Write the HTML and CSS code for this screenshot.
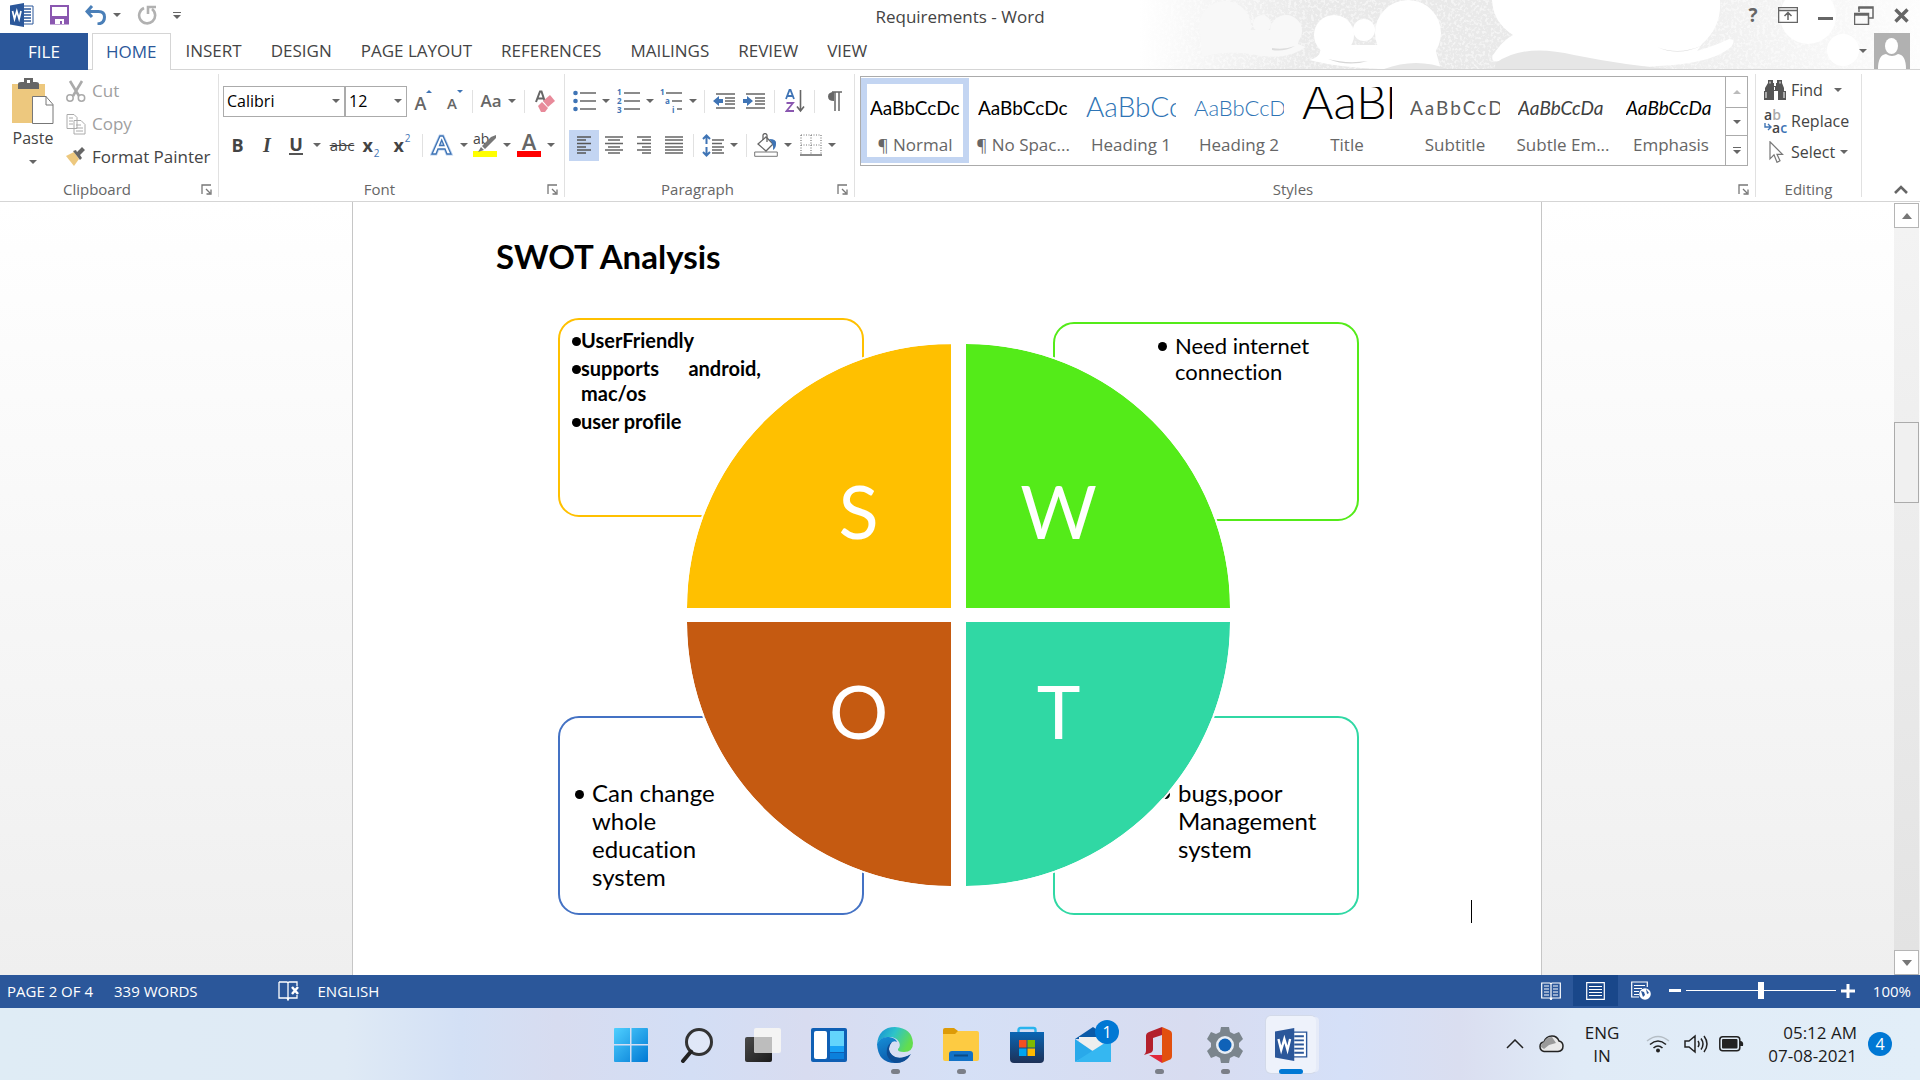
FILE: index.html
```html
<!DOCTYPE html>
<html lang="en">
<head>
<meta charset="utf-8">
<title>Requirements - Word</title>
<link rel="stylesheet" href="styles.css">
</head>
<body>
<svg class="sprite" aria-hidden="true">
  <symbol id="launcher" viewBox="0 0 11 11"><path d="M1 10V1h9M5 5l4 4M10 5.500v4.500H5.500" fill="none" stroke="#777" stroke-width="1.300"/></symbol>
  <symbol id="word" viewBox="0 0 24 24"><path d="M13 3h10v18H13z" fill="#fff" stroke="#2b579a"/><path d="M14 6h7M14 9h7M14 12h7M14 15h7M14 18h7" stroke="#2b579a" stroke-width="1.400"/><path d="M0 2.500 14 0v24L0 21.500z" fill="#2b579a"/><path d="M2.500 8l2 8 2.300-8 2.300 8L11 8" fill="none" stroke="#fff" stroke-width="1.700"/></symbol>
</svg>

<header class="header">
  <svg class="art" viewBox="0 0 780 69" aria-hidden="true">
    <defs>
      <linearGradient id="fade"><stop offset="0" stop-color="#fff"/><stop offset=".1" stop-color="#f4f4f4"/><stop offset=".22" stop-color="#e9e9e9"/><stop offset=".48" stop-color="#e9e9e9"/><stop offset=".75" stop-color="#f0f0f0"/><stop offset="1" stop-color="#fdfdfd"/></linearGradient>
      <filter id="grain" x="0" y="0" width="1" height="1"><feTurbulence type="fractalNoise" baseFrequency=".35" numOctaves="3" seed="4"/><feColorMatrix values="0 0 0 0 1  0 0 0 0 1  0 0 0 0 1  0 0 0 5 -2.400"/></filter>
    </defs>
    <path d="M0 0h780v69H0z" fill="url(#fade)"/>
    <path d="M0 0h780v69H0z" filter="url(#grain)" opacity=".5"/>
    <g fill="#f8f8f8"><circle cx="85" cy="27" r="26"/><circle cx="122" cy="24" r="9"/><circle cx="146" cy="31" r="16"/><path d="M60 30h98v14l8 3q-20 14-50 8-28-6-54 2z"/></g>
    <path d="M132 48q12 2 23-2-11 6-23 4z" fill="#ddd"/>
    <g fill="#fff"><circle cx="194" cy="35" r="20"/><circle cx="224" cy="30" r="11"/><circle cx="268" cy="33" r="33"/><path d="M180 45h115q0 5 6 24h-60q-40-1-72-9 14-3 11-15z"/>
    <path d="M352 0h228q2 26-18 44l-5 7q20-6 32-12 8 0 2 8-20 17-73 19-40 3-90-10-40-9-69 5-9 2-6-6 10-15 20-20Q353 22 352 0z"/><circle cx="703" cy="50" r="16"/><circle cx="668" cy="16" r="28"/></g>
    <path d="M188 59q18 5 40 2-20 6-40-2zM517 47q22 9 46-2-24 12-46 2z" fill="#d6d6d6"/>
    <path d="M244 69q32-12 64 0zM356 63q27-20 78-8 50 10 96 14H354z" fill="#e6e6e6"/>
  </svg>

  <div class="titlebar">
    <div class="quick">
      <svg width="24" height="24" role="img" aria-label="Word"><use href="#word"/></svg>
      <button aria-label="Save"><svg width="19" height="20" viewBox="0 0 19 20"><path d="M1 1h17v17.500H1z" fill="#fff" stroke="#8a57b0" stroke-width="2"/><path d="M1 11h17v8H1z" fill="#8a57b0"/><path d="M5 14h9v5h-2v-3h-2v3H5z" fill="#fff"/></svg></button>
      <button class="undo" aria-label="Undo"><svg width="22" height="20" viewBox="0 0 22 20"><path d="M7 1 2 6.500 7 12M2.500 6.500h11q6 0 6 5.500 0 6.500-7 7" fill="none" stroke="#4a7fb8" stroke-width="3"/></svg><i class="caret"></i></button>
      <button aria-label="Repeat"><svg width="20" height="20" viewBox="0 0 20 20"><path d="M15 4A8 8 0 1 1 7 3M11 9V2h8" fill="none" stroke="#b1b1b1" stroke-width="2.600"/></svg></button>
      <button class="more" aria-label="Customize Quick Access Toolbar"><i class="bar"></i><i class="caret"></i></button>
    </div>
    <h1 class="title">Requirements - Word</h1>
    <div class="window">
      <button class="help" aria-label="Help">?</button>
      <button aria-label="Ribbon display options"><svg width="20" height="16" viewBox="0 0 20 16"><path d="M.5.5h19v15H.5zM1 3.500h18M10 13V6M6.500 9 10 5.500 13.500 9" fill="none" stroke="#666" stroke-width="1.500"/></svg></button>
      <button aria-label="Minimize"><svg width="16" height="16" viewBox="0 0 16 16"><path d="M0 10h15v3H0z" fill="#666"/></svg></button>
      <button aria-label="Restore"><svg width="20" height="19" viewBox="0 0 20 19"><path d="M5 6V1h14v11h-4M4 2h15M.5 7.500h14v11H.5zM1 9h13" fill="none" stroke="#666" stroke-width="1.500"/></svg></button>
      <button aria-label="Close"><svg width="15" height="15" viewBox="0 0 15 15"><path d="m1.500 1.500 12 12m0-12-12 12" stroke="#666" stroke-width="3.400"/></svg></button>
    </div>
  </div>

  <nav class="tabs">
    <button class="file">FILE</button>
    <button class="active">HOME</button>
    <button>INSERT</button>
    <button>DESIGN</button>
    <button>PAGE LAYOUT</button>
    <button>REFERENCES</button>
    <button>MAILINGS</button>
    <button>REVIEW</button>
    <button>VIEW</button>
    <button class="account" aria-label="Account"><i class="caret"></i><svg width="36" height="36" viewBox="0 0 36 36"><path d="M0 0h36v36H0z" fill="#b1b1b1"/><ellipse cx="17.500" cy="13" rx="6.500" ry="8" fill="#fff"/><path d="M4 36q0-14 8-15 6 4 12 0 8 1 8 15z" fill="#fff"/></svg></button>
  </nav>
</header>

<section class="ribbon" aria-label="Home">
  <div class="group clipboard">
    <div class="body">
      <button class="paste"><svg width="42" height="46" viewBox="0 0 42 46"><path d="M0 6h33v39H0z" fill="#edc87e"/><path d="M6 11V6q0-2 3-2h3V0h9v4h3q3 0 3 2v5z" fill="#666"/><path d="M15 2h3v3h-3z" fill="#fff"/><path d="M20.500 18.500H34l7 8V45.500H20.500z" fill="#fff" stroke="#777"/><path d="M34 18v9h7" fill="none" stroke="#777"/></svg><span>Paste</span><i class="caret"></i></button>
      <div class="stack">
        <button class="off"><svg width="20" height="22" viewBox="0 0 20 22"><path d="m4 1 9 15M16 1 7 16" stroke="#aaa" stroke-width="2.600"/><circle cx="4" cy="18" r="3.200" fill="none" stroke="#aaa" stroke-width="1.500"/><circle cx="15.500" cy="18" r="3.200" fill="none" stroke="#aaa" stroke-width="1.500"/></svg>Cut</button>
        <button class="off"><svg width="20" height="22" viewBox="0 0 20 22"><g fill="#fff" stroke="#aaa"><path d="M1 1.500h7l3 3v11H1zM8 7.500h7l4 4v9.500H8z"/><path d="M3 5h4M3 8h4M3 11h4M10 12h5M10 15h7M10 18h7"/></g></svg>Copy</button>
        <button><svg width="20" height="20" viewBox="0 0 20 20"><path d="m0 9 8-4 5 7-5 7z" fill="#edc87e"/><path d="m7 4 3-1 1 2 5-5 3 3-5 5 2 3-2 2z" fill="#666"/></svg>Format Painter</button>
      </div>
    </div>
    <footer><span>Clipboard</span><button aria-label="Clipboard options"><svg width="11" height="11"><use href="#launcher"/></svg></button></footer>
  </div>

  <div class="group font">
    <div class="row f1">
      <label class="combo"><input type="text" value="Calibri" aria-label="Font"><i class="caret"></i></label>
      <label class="combo size"><input type="text" value="12" aria-label="Font size"><i class="caret"></i></label>
      <button class="resize grow" aria-label="Increase font size">A<i class="tri up"></i></button>
      <button class="resize shrink" aria-label="Decrease font size">A<i class="tri"></i></button>
      <i class="sep"></i>
      <button class="case">Aa<i class="caret"></i></button>
      <i class="sep"></i>
      <button aria-label="Clear formatting"><svg width="20" height="22" viewBox="0 0 20 22"><path d="M1 12 5 1.500h1.500L10 12M2.500 8.500h6" fill="none" stroke="#666" stroke-width="2"/><path d="m3 16 4-4 6 6-3 4H6z" fill="#e88a9a"/><path d="m8 11 7-6 5 6-7 6z" fill="#e88a9a"/></svg></button>
    </div>
    <div class="row f2">
      <button><b>B</b></button>
      <button class="italic">I</button>
      <button class="wide"><b class="under">U</b><i class="caret"></i></button>
      <button class="strike">abc</button>
      <button class="script"><b>x</b><sub>2</sub></button>
      <button class="script"><b>x</b><sup>2</sup></button>
      <i class="sep"></i>
      <button class="mid" aria-label="Text effects"><svg width="24" height="22" viewBox="0 0 24 22"><path d="M2 20 10 2h3l8 18h-4l-2-5H8l-2 5zM9.500 11.500h4.500L11.700 6z" fill="#fff" stroke="#b9d0ee" stroke-width="3"/><path d="M2 20 10 2h3l8 18h-4l-2-5H8l-2 5zM9.500 11.500h4.500L11.700 6z" fill="#fff" stroke="#3f74b5" stroke-width="1.300"/></svg><i class="caret"></i></button>
      <button class="mid" aria-label="Text highlight color"><span class="mark">ab<svg width="24" height="18" viewBox="0 0 24 18"><path d="m23 0-5 2-9 9 3 3 11-11zM8 12l-3 5 6-2z" fill="#777"/></svg></span><i class="caret"></i></button>
      <button class="mid" aria-label="Font color"><span class="inkred">A</span><i class="caret"></i></button>
    </div>
    <footer><span>Font</span><button aria-label="Font options"><svg width="11" height="11"><use href="#launcher"/></svg></button></footer>
  </div>

  <div class="group paragraph">
    <div class="row p1">
      <button aria-label="Bullets"><svg width="23" height="22" viewBox="0 0 23 22"><path d="M7 3h16M7 11h16M7 19h16" stroke="#666" stroke-width="1.300"/><g fill="#3f74b5"><circle cx="2.500" cy="3" r="2.300"/><circle cx="2.500" cy="11" r="2.300"/><circle cx="2.500" cy="19" r="2.300"/></g></svg><i class="caret"></i></button>
      <button aria-label="Numbering"><svg class="num" width="23" height="22" viewBox="0 0 23 22"><path d="M7 3h16M7 11h16M7 19h16" stroke="#666" stroke-width="1.300"/><g fill="#3f74b5"><text x="0" y="5">1</text><text x="0" y="14">2</text><text x="0" y="23">3</text></g></svg><i class="caret"></i></button>
      <button aria-label="Multilevel list"><svg class="num" width="23" height="22" viewBox="0 0 23 22"><path d="M6 3h16M12 11h10M17 19h5" stroke="#666" stroke-width="1.300"/><g fill="#3f74b5"><text x="0" y="5">1</text><text x="5" y="14">a</text><text x="12" y="23">i</text></g></svg><i class="caret"></i></button>
      <i class="sep"></i>
      <button aria-label="Decrease indent"><svg width="22" height="16" viewBox="0 0 22 16"><path d="M3 1h19M12 5h10M12 8h10M12 11h10M3 15h19" stroke="#666" stroke-width="1.300"/><path d="M0 8l6-5v3h4v4H6v3z" fill="#3f74b5"/></svg></button>
      <button aria-label="Increase indent"><svg width="22" height="16" viewBox="0 0 22 16"><path d="M3 1h19M12 5h10M12 8h10M12 11h10M3 15h19" stroke="#666" stroke-width="1.300"/><path d="M10 8 4 3v3H0v4h4v3z" fill="#3f74b5"/></svg></button>
      <i class="sep"></i>
      <button aria-label="Sort"><svg width="20" height="24" viewBox="0 0 20 24"><path d="M1 10 4.500 1h1L9 10M2.500 7h5" fill="none" stroke="#3f74b5" stroke-width="1.800"/><path d="M1.500 14H8l-6.500 8H9" fill="none" stroke="#8a57b0" stroke-width="1.800"/><path d="M15.500 1v21M12 17.500l3.500 4.500 3.500-4.500" fill="none" stroke="#666" stroke-width="1.600"/></svg></button>
      <i class="sep"></i>
      <button aria-label="Show formatting marks"><svg width="15" height="20" viewBox="0 0 15 20"><path d="M7 1v9Q1 10 1 5.500 1 1 7 1z" fill="#666"/><path d="M5 1h10M8 1v19M12 1v19" stroke="#666" stroke-width="1.500"/></svg></button>
    </div>
    <div class="row p2">
      <button class="on" aria-label="Align left"><svg width="14" height="18" viewBox="0 0 14 18"><path d="M0 1h14M0 4h9M0 7.500h14M0 11h9M0 14h14M0 17h9" stroke="#555" stroke-width="1.300"/></svg></button>
      <button aria-label="Center"><svg width="18" height="18" viewBox="0 0 18 18"><path d="M0 1h18M3 4h12M0 7.500h18M3 11h12M0 14h18M3 17h12" stroke="#666" stroke-width="1.300"/></svg></button>
      <button aria-label="Align right"><svg width="14" height="18" viewBox="0 0 14 18"><path d="M0 1h14M5 4h9M0 7.500h14M5 11h9M0 14h14M5 17h9" stroke="#666" stroke-width="1.300"/></svg></button>
      <button aria-label="Justify"><svg width="18" height="18" viewBox="0 0 18 18"><path d="M0 1h18M0 4h18M0 7.500h18M0 11h18M0 14h18M0 17h18" stroke="#666" stroke-width="1.300"/></svg></button>
      <i class="sep"></i>
      <button aria-label="Line spacing"><svg width="22" height="23" viewBox="0 0 22 23"><path d="M10 6h12M10 9.500h10M10 13h12M10 16h10M10 19h12" stroke="#666" stroke-width="1.300"/><path d="M4.500 2v8M4.500 13v8M1 5l3.500-3.500L8 5M1 18l3.500 3.500L8 18" fill="none" stroke="#3f74b5" stroke-width="2"/></svg><i class="caret"></i></button>
      <i class="sep"></i>
      <button aria-label="Shading"><svg width="24" height="24" viewBox="0 0 24 24"><path d="M.7 19h22.600v4.300H.7z" fill="#fff" stroke="#777"/><path d="M4 11 12 4l7 7-7 7z" fill="#fff" stroke="#666" stroke-width="1.300"/><path d="M9 7V2q2-3 4 0v7" fill="none" stroke="#666" stroke-width="1.300"/><path d="M15 6q8 0 7 5 0 4-3 6 1-6-4-11z" fill="#3f74b5"/></svg><i class="caret"></i></button>
      <button aria-label="Borders"><svg width="22" height="22" viewBox="0 0 22 22"><path d="M1 1h20v20M1 1v20M11 1v20M1 11h20" fill="none" stroke="#777" stroke-width="1.200" stroke-dasharray="1 1.500"/><path d="M0 21h22" stroke="#666" stroke-width="1.500"/></svg><i class="caret"></i></button>
    </div>
    <footer><span>Paragraph</span><button aria-label="Paragraph options"><svg width="11" height="11"><use href="#launcher"/></svg></button></footer>
  </div>

  <div class="group styles">
    <div class="gallery">
      <button class="style picked"><span class="pv">AaBbCcDc</span><span>¶ Normal</span></button>
      <button class="style"><span class="pv">AaBbCcDc</span><span>¶ No Spac...</span></button>
      <button class="style"><span class="pv h1">AaBbCc</span><span>Heading 1</span></button>
      <button class="style"><span class="pv h2">AaBbCcD</span><span>Heading 2</span></button>
      <button class="style"><span class="pv ttl">AaBb</span><span>Title</span></button>
      <button class="style"><span class="pv sub">AaBbCcD</span><span>Subtitle</span></button>
      <button class="style"><span class="pv em soft">AaBbCcDa</span><span>Subtle Em...</span></button>
      <button class="style"><span class="pv em">AaBbCcDa</span><span>Emphasis</span></button>
      <div class="pager">
        <button class="dim" aria-label="Previous styles"><i class="caret up"></i></button>
        <button aria-label="Next styles"><i class="caret"></i></button>
        <button class="more" aria-label="More styles"><i class="bar"></i><i class="caret"></i></button>
      </div>
    </div>
    <footer><span>Styles</span><button aria-label="Styles options"><svg width="11" height="11"><use href="#launcher"/></svg></button></footer>
  </div>

  <div class="group editing">
    <div class="stack">
      <button><svg width="22" height="20" viewBox="0 0 22 20"><path d="M4 0h5v3h1v3h2V3h1V0h5v3l2 5v3h2v9h-8v-9h-4v9H0v-9h1V8l3-5z" fill="#555"/><path d="M2 12v6M20 12v6M10.500 7v3M6 1.500v2M16 1.500v2" stroke="#fff"/></svg>Find<i class="caret far"></i></button>
      <button><span class="abac"><span>a<em>b</em></span><span><svg width="8" height="8" viewBox="0 0 8 8"><path d="M1 0v4h6M4 1l3 3-3 3" fill="none" stroke="#3f74b5" stroke-width="1.400"/></svg>a<u>c</u></span></span>Replace</button>
      <button><svg width="22" height="22" viewBox="0 0 22 22"><path d="M6 .8v17l4-4 3 7.500 3-1.500-3-6.500h5.500z" fill="#fff" stroke="#777" stroke-width="1.200"/></svg>Select<i class="caret"></i></button>
    </div>
    <footer><span>Editing</span></footer>
  </div>
  <button class="collapse" aria-label="Collapse the ribbon"><svg width="14" height="9" viewBox="0 0 14 9"><path d="m1 8 6-6 6 6" fill="none" stroke="#666" stroke-width="2.600"/></svg></button>
</section>

<main class="workspace">
  <article class="page">
    <h2>SWOT Analysis</h2>
    <div class="line">
      <div class="diagram">
        <ul class="card s"><li>UserFriendly</li><li><span class="spread"><span>supports</span><span>android,</span></span>mac/os</li><li>user profile</li></ul>
        <ul class="card w"><li>Need internet connection</li></ul>
        <ul class="card o"><li>Can change whole education system</li></ul>
        <ul class="card t"><li>bugs,poor Management system</li></ul>
        <div class="wheel">
          <div class="q qs">S</div><div class="q qw">W</div><div class="q qo">O</div><div class="q qt">T</div>
        </div>
      </div>
      <i class="cursor"></i>
    </div>
  </article>
  <div class="scroll">
    <button aria-label="Scroll up"><i class="arrow up"></i></button>
    <div class="track"><div class="thumb"></div></div>
    <button aria-label="Scroll down"><i class="arrow"></i></button>
  </div>
</main>

<footer class="status">
  <span>PAGE 2 OF 4</span>
  <span class="words">339 WORDS</span>
  <svg width="22" height="20" viewBox="0 0 22 20"><path d="M1 1h8l1 1 1-1h8v4M1 1v16h8l1 2 1-2h8v-3M10 2v16" fill="none" stroke="#fff" stroke-width="1.300"/><path d="m14 6 6 7m0-7-6 7" stroke="#fff" stroke-width="2.500"/></svg>
  <span>ENGLISH</span>
  <div class="views">
    <button aria-label="Read mode"><svg width="20" height="18" viewBox="0 0 20 18"><path d="M.7 1H9l1 1 1-1h8.300v15H11l-1 2-1-2H.7zM10 1v16M3 4h5M3 7h5M3 10h5M3 13h5M12 4h5M12 7h5M12 10h5M12 13h5" fill="none" stroke="#fff" stroke-width="1.200"/></svg></button>
    <button class="on" aria-label="Print layout"><svg width="19" height="18" viewBox="0 0 19 18"><path d="M.7.700h17.600v16.600H.7zM3 4.500h13M3 7.500h13M3 10.500h13M3 13.500h13" fill="none" stroke="#fff" stroke-width="1.200"/></svg></button>
    <button aria-label="Web layout"><svg width="20" height="20" viewBox="0 0 20 20"><path d="M8 16H.7V1h15.600v5M3 4.500h11M3 7.500h8M3 10.500h5M3 13.500h5" fill="none" stroke="#fff" stroke-width="1.200"/><circle cx="14" cy="13" r="5.800" fill="#fff"/><path d="m10 10 3 1 1 3-2 2M15 8l3 4-2 1z" fill="#2b579a"/></svg></button>
    <button class="zoom" aria-label="Zoom out"><svg width="12" height="3"><path d="M0 0h12v3H0z" fill="#fff"/></svg></button>
    <input type="range" min="0" max="100" value="50" aria-label="Zoom">
    <button class="zoom" aria-label="Zoom in"><svg width="14" height="14"><path d="M0 5.500h14v3H0zM5.500 0h3v14h-3z" fill="#fff"/></svg></button>
    <span class="percent">100%</span>
  </div>
</footer>

<nav class="taskbar" aria-label="Taskbar">
  <div class="apps">
    <button aria-label="Start"><svg width="36" height="36" viewBox="0 0 36 36"><defs><linearGradient id="gw" x2="1" y2="1"><stop offset="0" stop-color="#4fd0ff"/><stop offset="1" stop-color="#0078d4"/></linearGradient></defs><path d="M1 2q0-1 1-1h15v16H1zM18.500 1H34q1 0 1 1v15H18.500zM1 18.500h16V35H2q-1 0-1-1zM18.500 18.500H35V34q0 1-1 1H18.500z" fill="url(#gw)"/></svg></button>
    <button aria-label="Search"><svg width="36" height="36" viewBox="0 0 36 36"><circle cx="20" cy="15" r="12.500" fill="#fff" fill-opacity=".3" stroke="#333" stroke-width="3"/><path d="M12 24.500 4 34" stroke="#222" stroke-width="4" stroke-linecap="round"/></svg></button>
    <button aria-label="Task view"><svg width="36" height="36" viewBox="0 0 36 36"><defs><linearGradient id="gt" x2="1" y2="1"><stop offset="0" stop-color="#4a4a4a"/><stop offset="1" stop-color="#1b1b1b"/></linearGradient></defs><rect y="10" width="27" height="25" rx="2" fill="url(#gt)"/><rect x="9" y="1" width="27" height="25" rx="2" fill="#f4f4f4"/><path d="M9 10h18v16H11q-2 0-2-2z" fill="#bdbdbd"/></svg></button>
    <button aria-label="Widgets"><svg width="36" height="36" viewBox="0 0 36 36"><rect y="1" width="36" height="34" rx="2" fill="#0f5fb4"/><rect x="3" y="4" width="13" height="28" rx="2" fill="#fff"/><path d="M19 4h14v15H19z" fill="#63d4fc"/><path d="M19 19h14v6H19z" fill="#19a2f5"/><path d="M19 26h14v6H19z" fill="#0b80dc"/></svg></button>
    <button class="open" aria-label="Edge"><svg width="38" height="38" viewBox="0 0 38 38"><defs><linearGradient id="ge1" x2="1" y2=".4"><stop offset="0" stop-color="#1489d6"/><stop offset=".5" stop-color="#2ec3c9"/><stop offset="1" stop-color="#63dd4e"/></linearGradient><linearGradient id="ge2" x2=".5" y2="1"><stop offset="0" stop-color="#1790d8"/><stop offset="1" stop-color="#0a57a8"/></linearGradient></defs><path d="M1 18Q3 1 19 1q17 1 18 16 0 9-9 9-7 0-6-3 3-3 1-7-3-5-10-5Q5 11 1 18z" fill="url(#ge1)"/><path d="M1 18q4-8 12-7 7 1 8 5-4-2-7 2-3 5 1 10 6 8 19 1-5 8-15 8Q2 37 1 18z" fill="url(#ge2)"/><path d="M16 16q-6 7 0 13 7 6 19-1-5 9-15 9Q9 33 11 23q1-5 5-7z" fill="#0d4d94"/></svg></button>
    <button class="open" aria-label="File Explorer"><svg width="36" height="36" viewBox="0 0 36 36"><path d="M0 3q0-2 2-2h9l4 3v5H0z" fill="#dd9b07"/><path d="M0 7h12l3-3h19q2 0 2 2v26q0 2-2 2H2q-2 0-2-2z" fill="#fdcb42"/><path d="M6 34V27q0-3 3-3h18q3 0 3 3v7z" fill="#1272c7"/><path d="M11 28.500h14" stroke="#0b4b86" stroke-width="2"/></svg></button>
    <button aria-label="Microsoft Store"><svg width="36" height="38" viewBox="0 0 36 38"><defs><linearGradient id="gs" x2="0" y2="1"><stop offset="0" stop-color="#0a66b4"/><stop offset="1" stop-color="#1e3157"/></linearGradient></defs><path d="M9.500 8V4q0-2 2-2h13q2 0 2 2v4" fill="none" stroke="#29b4ee" stroke-width="2.400"/><path d="M1 6h34v27q0 4-4 4H5q-4 0-4-4z" fill="url(#gs)"/><path d="M10 14h7.500v7.500H10z" fill="#f25022"/><path d="M18.500 14H26v7.500h-7.500z" fill="#7fba00"/><path d="M10 22.500h7.500V30H10z" fill="#00a4ef"/><path d="M18.500 22.500H26V30h-7.500z" fill="#ffb900"/></svg></button>
    <button class="mail" aria-label="Mail"><svg width="36" height="36" viewBox="0 0 36 36"><path d="M0 12 18 0l18 12z" fill="#0a5aa8"/><path d="M4 10h28v10L18 26 4 18z" fill="#eee"/><path d="M0 12l19 13L0 35z" fill="#29a9ea"/><path d="M36 12v23H0z" fill="#35b7f1"/></svg><span class="count">1</span></button>
    <button class="open" aria-label="Office"><svg width="30" height="36" viewBox="0 0 30 36"><path d="M18 0 5 5Q2 6 2 9v15q0 2-2 4l6-2q3-1 3-4V11l9-3z" fill="#b3202c"/><path d="m18 0 7 3q3 1 3 4v22q0 3-3 4l-7 3z" fill="#e2500f"/><path d="M5 28h13v8z" fill="#e0283c"/></svg></button>
    <button class="open" aria-label="Settings"><svg width="36" height="36" viewBox="0 0 36 36"><path d="M14 0h8l1 5 4 2 5-2 4 7-4 4v4l4 4-4 7-5-2-4 2-1 5h-8l-1-5-4-2-5 2-4-7 4-4v-4l-4-4 4-7 5 2 4-2z" fill="#7b858d"/><circle cx="18" cy="18" r="9" fill="#e8eef5"/><circle cx="18" cy="18" r="6.500" fill="#0f62b8"/></svg></button>
    <button class="current" aria-label="Word"><svg width="33" height="33"><use href="#word"/></svg></button>
  </div>
  <div class="tray">
    <button aria-label="Show hidden icons"><svg width="18" height="10" viewBox="0 0 18 10"><path d="m1 9 8-8 8 8" fill="none" stroke="#222" stroke-width="1.500"/></svg></button>
    <svg width="25" height="18" viewBox="0 0 25 18"><path d="M5 16.500q-4-1-4-5t4-4.500q2-6 8-6 5 0 7 5 4 1 4 5 0 5-5 5.500z" fill="#e9e9e9" stroke="#222" stroke-width="1.500"/><path d="M5 7q2-5 8-5l4 6-7 2-5 4-3-2q0-4 3-5z" fill="#9a9a9a"/></svg>
    <span class="lang">ENG<br>IN</span>
    <svg width="24" height="18" viewBox="0 0 24 18"><path d="M1 6Q12-3 23 6" fill="none" stroke="#b5bec6" stroke-width="1.500"/><path d="M4 9.500q8-7 16 0M7.500 13q4.500-4 9 0" fill="none" stroke="#222" stroke-width="1.600"/><circle cx="12" cy="15.500" r="2" fill="#222"/></svg>
    <svg width="24" height="20" viewBox="0 0 24 20"><path d="M1 7h4l6-5v16l-6-5H1zM14 7q2 3 0 6M17 4.500q4 5.500 0 11M20 2q6 8 0 16" fill="none" stroke="#222" stroke-width="1.500"/></svg>
    <svg width="25" height="16" viewBox="0 0 25 16"><rect x=".8" y=".8" width="20" height="14" rx="3" fill="none" stroke="#222" stroke-width="1.500"/><rect x="3" y="3" width="15.500" height="9.500" rx="1" fill="#222"/><path d="M21 5q4 0 3 5h-3z" fill="#222"/></svg>
    <span class="clock">05:12 AM<br>07-08-2021</span>
    <span class="note">4</span>
  </div>
</nav>
</body>
</html>
```
FILE: styles.css
```css
* { box-sizing: border-box; }

body {
  margin: 0;
  height: 100vh;
  display: flex;
  flex-direction: column;
  overflow: hidden;
  background: #fff;
  color: #444;
  font: 16px/22px "Open Sans", "Noto Sans", sans-serif;
}

button {
  display: flex;
  align-items: center;
  justify-content: center;
  padding: 0;
  border: 0;
  background: none;
  color: inherit;
  font: inherit;
  white-space: nowrap;
}

svg { display: block; flex: none; }
.sprite { position: absolute; width: 0; height: 0; }

.caret {
  flex: none;
  border: 4px solid transparent;
  border-top-color: #666;
  border-bottom: 0;
}
.caret.up { border-top: 0; border-bottom: 4px solid #bbb; }
.bar { width: 8px; height: 1px; background: #666; }

/* title bar and tabs */
.header { position: relative; flex: none; }
.art { position: absolute; right: 0; top: 0; width: 780px; height: 69px; }

.titlebar {
  position: relative;
  height: 33px;
  display: grid;
  grid-template-columns: 1fr auto 1fr;
  align-items: start;
}
.quick { display: flex; align-items: center; height: 30px; padding-left: 10px; gap: 16px; }
.quick .undo { gap: 6px; }
.more { flex-direction: column; gap: 2px; }
.title { margin: 0; font-size: 17px; font-weight: 400; line-height: 33px; }
.window { justify-self: end; display: flex; align-items: center; height: 30px; gap: 20px; padding-right: 11px; }
.help { width: 10px; font-size: 19px; font-weight: 700; color: #666; }

.tabs {
  position: relative;
  display: flex;
  gap: 1px;
  height: 37px;
  border-bottom: 1px solid #d5d5d5;
}
.tabs button { padding: 0 14px; font-size: 17px; }
.tabs .file { width: 88px; height: 37px; margin-right: 3px; background: #2b579a; color: #fff; }
.tabs .active { height: 37px; padding: 0 13px; border: 1px solid #d5d5d5; border-bottom: 0; background: #fff; color: #2b579a; }
.tabs .account { margin-left: auto; padding: 0 10px 0 0; gap: 7px; }

/* ribbon */
.ribbon {
  flex: none;
  display: flex;
  height: 132px;
  padding: 4px 0;
  border-bottom: 1px solid #d5d5d5;
}
.group {
  display: flex;
  flex-direction: column;
  border-right: 1px solid #e1e1e1;
}
.group footer { display: flex; margin-top: auto; padding: 0 4px 0 0; height: 16px; color: #666; font-size: 15px; line-height: 16px; }
.group footer span { flex: 1; padding-right: 4px; text-align: center; }
.group footer button { width: 16px; }

.clipboard { width: 219px; }
.body { display: flex; }
.paste { flex-direction: column; width: 66px; justify-content: flex-start; padding-top: 4px; gap: 3px; }
.paste .caret { margin-top: 8px; }
.stack { display: flex; flex-direction: column; }
.stack button { justify-content: flex-start; height: 33px; gap: 6px; }
.clipboard .stack { font-size: 17px; }
.off { color: #a0a0a0; }

.row { display: grid; align-items: center; justify-items: center; height: 32px; padding-left: 4px; }
.row button { height: 31px; gap: 6px; }
.sep { width: 1px; height: 23px; background: #e1e1e1; }

.font { width: 346px; }
.f1, .p1 { margin: 11px 0 12px; }
.f1 { grid-template-columns: 122px 62px 33px 30px 4px 48px 4px 38px; }
.f2 { grid-template-columns: 29px 30px 46px 28px 30px 32px 8px 46px 40px 48px; font-size: 18px; }
.combo { display: flex; align-items: center; width: 100%; height: 31px; padding-right: 4px; border: 1px solid #ababab; }
.combo input { flex: 1; min-width: 0; padding: 0 3px; border: 0; background: none; color: #000; font: inherit; }
.row .resize { padding-top: 4px; gap: 0; font-size: 18px; font-weight: 600; color: #666; }
.row .shrink { font-size: 15px; }
.tri { align-self: flex-start; border: 3px solid transparent; border-top-color: #3f74b5; border-bottom: 0; }
.tri.up { border-top: 0; border-bottom: 3px solid #3f74b5; }
.case { font-size: 17px; font-weight: 600; color: #666; }
.italic { font: italic 700 20px/22px "Liberation Serif", serif; }
.row .wide { gap: 10px; }
.under { border-bottom: 2px solid #555; line-height: 18px; }
.row .strike { font-size: 15px; text-decoration: line-through; }
.row .script { gap: 1px; }
.script sub, .script sup { font-size: 10px; line-height: 10px; color: #3f74b5; }
.script sub { align-self: flex-end; padding-bottom: 3px; }
.script sup { align-self: flex-start; padding-top: 3px; }
.mark { position: relative; width: 24px; height: 24px; border-bottom: 6px solid #ff0; font-size: 14px; line-height: 12px; text-align: left; }
.mark svg { position: absolute; left: 0; top: 2px; }
.inkred { width: 24px; height: 24px; border-bottom: 6px solid #f00; font-size: 22px; font-weight: 600; line-height: 17px; color: #666; }

.paragraph { width: 290px; }
.p1 { grid-template-columns: 44px 44px 43px 8px 32px 28px 12px 30px 8px 32px; }
.p2 { grid-template-columns: 30px 30px 30px 30px 8px 46px 6px 48px 42px; }
.p2 .on { width: 30px; background: #c3d5f2; }
.num { overflow: visible; font-size: 8px; font-weight: 700; line-height: 8px; }

.styles { flex: 1; min-width: 0; }
.gallery { display: flex; height: 90px; margin: 2px 7px 0 5px; border: 1px solid #ababab; }
.style {
  flex: 1;
  flex-direction: column;
  justify-content: flex-start;
  height: 85px;
  margin-top: 1px;
  padding: 3px 2px 0;
  border: 6px solid transparent;
  color: #666;
  min-width: 0;
  font-size: 17px;
}
.picked { border-color: #c3d5f2; }
.pv { width: 90px; height: 36px; margin-bottom: 11px; overflow: hidden; text-align: left; color: #000; font: 19px/41px Lato, sans-serif; }
.style span + span { line-height: 22px; }
.pv.h1 { font-size: 28px; line-height: 38px; font-weight: 300; color: #2e74b5; }
.pv.h2 { font-size: 22px; line-height: 41px; font-weight: 300; color: #2e74b5; }
.pv.ttl { font-size: 48px; line-height: 27px; font-weight: 300; }
.pv.sub { letter-spacing: 2px; color: #5a5a5a; }
.pv.em { font-style: italic; }
.pv.soft { color: #404040; }
.pager { display: grid; grid-template-rows: 30px 28px 1fr; width: 22px; border-left: 1px solid #ababab; }
.pager button + button { border-top: 1px solid #ababab; }

.editing { width: 106px; padding-left: 8px; }
.editing .stack button { height: 31px; gap: 5px; }
.far { margin-left: 6px; }
.abac { display: flex; flex-direction: column; width: 22px; font-size: 14px; line-height: 13px; font-weight: 600; text-align: left; }
.abac > span { display: flex; align-items: center; height: 13px; }
.abac em { font-style: normal; color: #aaa; }
.abac u { text-decoration: none; color: #3f74b5; }
.collapse { align-self: flex-end; margin-left: 32px; margin-right: 12px; height: 16px; }

/* document */
.workspace { flex: 1; min-height: 0; display: flex; background: linear-gradient(#fff, #efefef); }
.page {
  width: 1190px;
  margin: 0 auto;
  padding: 32px 0 0 143px;
  overflow: hidden;
  background: #fff;
  border: 1px solid #c6c6c6;
  border-width: 0 1px;
  color: #000;
  font-family: Lato, sans-serif;
  font-variant-ligatures: none;
}
.page h2 { margin: 0 0 40px; font-size: 33px; line-height: 44px; font-weight: 700; }
.line { display: flex; align-items: flex-end; margin-left: 62px; }
.cursor { width: 1px; height: 23px; margin-left: 112px; background: #000; }

.diagram {
  position: relative;
  display: grid;
  grid-template-columns: 306px 306px;
  justify-content: space-between;
  align-content: space-between;
  width: 801px;
  height: 597px;
  margin-bottom: 8px;
}
.card { height: 199px; margin: 0; border: 2px solid; border-radius: 21px; list-style: none; }
.card li { position: relative; color: #000; }
.card li::before { content: ""; position: absolute; left: -17px; top: 9px; width: 9px; height: 9px; border-radius: 50%; background: #000; }
.s { padding: 8px 0 0 21px; border-color: #ffc000; font-size: 20px; line-height: 25px; font-weight: 700; }
.s li { margin-bottom: 3px; }
.card.s li::before { left: -9px; }
.spread { display: flex; justify-content: space-between; width: 180px; }
.card.w { margin-top: 4px; margin-bottom: -4px; padding: 9px 30px 0 120px; border-color: #54eb19; font-size: 22px; line-height: 26px; }
.o { padding: 61px 130px 0 32px; border-color: #4472c4; font-size: 24px; line-height: 28px; }
.t { padding: 61px 20px 0 123px; border-color: #30d8a4; font-size: 24px; line-height: 28px; }
.o li::before, .t li::before { top: 11px; }

.wheel {
  position: absolute;
  top: 26px;
  left: 129px;
  display: grid;
  grid-template-columns: 264px 264px;
  grid-template-rows: 264px 264px;
  gap: 14px 15px;
}
.q { display: flex; align-items: center; justify-content: center; outline: 2px solid #fff; color: #fff; font-size: 74px; line-height: 74px; }
.qs { background: #ffc000; border-radius: 264px 0 0 0; padding: 70px 0 0 79px; }
.qw { background: #54eb19; border-radius: 0 264px 0 0; padding: 70px 79px 0 0; }
.qo { background: #c55a11; border-radius: 0 0 0 264px; padding: 0 0 86px 79px; }
.qt { background: #30d8a4; border-radius: 0 0 264px 0; padding: 0 79px 86px 0; }

.scroll { display: flex; flex-direction: column; width: 26px; padding: 1px 1px 0 0; }
.scroll button { height: 25px; border: 1px solid #b5b5b5; background: #fff; }
.arrow { border: 5px solid transparent; border-top: 6px solid #777; border-bottom: 0; }
.arrow.up { border-top: 0; border-bottom: 6px solid #777; }
.track { flex: 1; padding-top: 194px; background: linear-gradient(#f3f3f3, #e3e3e3); }
.thumb { height: 81px; border: 1px solid #ababab; background: #f0f0f0; }

/* status bar */
.status { flex: none; display: flex; align-items: center; height: 33px; padding: 0 0 2px 7px; background: #2b579a; color: #fff; font-size: 15px; }
.words { margin: 0 80px 0 21px; }
.status > svg { margin-right: 18px; }
.views { display: flex; align-items: center; height: 31px; margin-left: auto; }
.views button { width: 45px; height: 31px; }
.views .on { background: #19478a; }
.views .zoom { width: 23px; }
.views input { appearance: none; width: 150px; height: 20px; margin: 0; background: linear-gradient(#fff, #fff) center / 100% 1px no-repeat; }
.views input::-webkit-slider-thumb { appearance: none; width: 6px; height: 17px; background: #fff; }
.percent { width: 61px; padding-right: 9px; text-align: right; }

/* taskbar */
.taskbar {
  flex: none;
  display: grid;
  grid-template-columns: 1fr auto 1fr;
  height: 72px;
  background: linear-gradient(90deg, #dfecf5 0, #dfeaf5 18%, #d3e0f5 24%, #d7dcf0 29%, #d3def5 36%, #d8dcf0 42%, #d5e0f6 50%, #d8dcf0 62%, #d5e0f8 70%, #dadef0 76%, #e0ebf7 82%, #e2eef8);
  color: #1b1b1b;
}
.apps { grid-column: 2; display: flex; margin-left: 2px; }
.apps button { position: relative; width: 66px; padding-top: 1px; }
.open::after, .current::after { content: ""; position: absolute; left: 29px; top: 61px; width: 9px; height: 5px; border-radius: 3px; background: #7b7f88; }
.apps .current { width: 50px; height: 57px; margin: 8px; border-radius: 5px; background: #eef2fb; box-shadow: 4px 0 0 -1px #e6ebf8, 0 0 0 1px #d3dae9; padding: 0; }
.apps .current::after { left: 13px; top: 53px; width: 24px; background: #0078d4; }
.count { position: absolute; right: 7px; top: 12px; width: 24px; height: 24px; border-radius: 50%; background: #0078d4; color: #fff; line-height: 24px; }
.tray {
  justify-self: end;
  display: grid;
  grid-template-columns: 30px 42px 60px 52px 24px 46px 103px 46px;
  align-items: center;
  justify-items: center;
  padding: 0 17px 2px 0;
  font-size: 17px;
  line-height: 23px;
}
.lang { text-align: center; }
.clock { justify-self: end; text-align: right; }
.note { width: 24px; height: 24px; border-radius: 50%; background: #0078d4; color: #fff; font-size: 16px; line-height: 24px; text-align: center; }
```
